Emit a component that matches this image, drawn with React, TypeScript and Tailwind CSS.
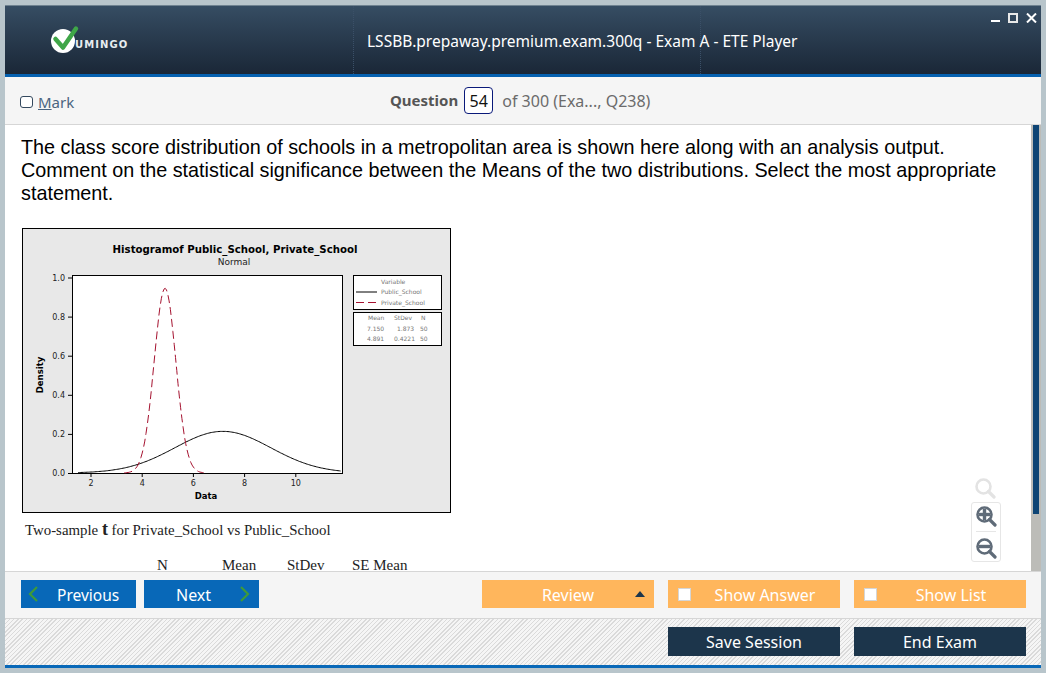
const ui = "font-['Noto_Sans','Open_Sans',sans-serif]";

// chart scale taken from the tick marks
const sx = (v: number) => 91 + 25.6 * (v - 2);
const sy = (d: number) => 473 - 195.5 * d;

function normalPath(mean: number, sd: number, from: number, to: number) {
  const pts: string[] = [];
  for (let v = from; v <= to + 0.001; v += 0.05) {
    const d = Math.exp(-((v - mean) ** 2) / (2 * sd * sd)) / (sd * Math.sqrt(2 * Math.PI));
    pts.push(`${sx(v).toFixed(1)},${sy(d).toFixed(1)}`);
  }
  return "M" + pts.join(" L");
}

function Chart() {
  const face = "'DejaVu Sans', sans-serif";
  const yTicks = [
    [1, "1.0"],
    [0.8, "0.8"],
    [0.6, "0.6"],
    [0.4, "0.4"],
    [0.2, "0.2"],
    [0, "0.0"],
  ] as const;
  return (
    <svg width="429" height="285" viewBox="22 228 429 285" className="block">
      <rect x="22.5" y="228.5" width="428" height="284" fill="#e8e8e8" stroke="#000" />
      <text x="235" y="253" textAnchor="middle" fontFamily={face} fontWeight="700" fontSize="10.2" fill="#000">
        Histogramof Public_School, Private_School
      </text>
      <text x="234" y="265" textAnchor="middle" fontFamily={face} fontSize="9" fill="#222">
        Normal
      </text>
      <rect x="72.5" y="275.5" width="270" height="198" fill="#fff" stroke="#000" />
      {yTicks.map(([d, label]) => (
        <g key={label}>
          <line x1="68" x2="72" y1={sy(d) + 0.5} y2={sy(d) + 0.5} stroke="#000" />
          <text x="65" y={sy(d) + 3} textAnchor="end" fontFamily={face} fontSize="8" fill="#222">
            {label}
          </text>
        </g>
      ))}
      {[2, 4, 6, 8, 10].map((v) => (
        <g key={v}>
          <line x1={sx(v)} x2={sx(v)} y1="473" y2="477" stroke="#000" />
          <text x={sx(v)} y="486" textAnchor="middle" fontFamily={face} fontSize="8" fill="#222">
            {v}
          </text>
        </g>
      ))}
      <text x="206" y="499" textAnchor="middle" fontFamily={face} fontWeight="700" fontSize="8.5" fill="#000">
        Data
      </text>
      <text
        transform="translate(43 375) rotate(-90)"
        textAnchor="middle"
        fontFamily={face}
        fontWeight="700"
        fontSize="8.5"
        fill="#000"
      >
        Density
      </text>
      <path d={normalPath(7.15, 1.873, 1.5, 11.75)} fill="none" stroke="#000" strokeWidth="1" />
      <path
        d={normalPath(4.891, 0.4221, 3.3, 6.4)}
        fill="none"
        stroke="#a5122f"
        strokeWidth="1"
        strokeDasharray="8 4"
      />
      <rect x="353.5" y="275.5" width="88" height="34" fill="#fff" stroke="#000" />
      <rect x="353.5" y="312.5" width="88" height="33" fill="#fff" stroke="#000" />
      <g fontFamily={face} fontSize="6" fill="#777">
        <text x="381" y="284">Variable</text>
        <text x="381" y="294">Public_School</text>
        <text x="381" y="305">Private_School</text>
        <text x="368" y="320">Mean</text>
        <text x="394" y="320">StDev</text>
        <text x="421" y="320">N</text>
        <text x="367" y="331">7.150</text>
        <text x="397" y="331">1.873</text>
        <text x="420" y="331">50</text>
        <text x="367" y="341">4.891</text>
        <text x="394" y="341">0.4221</text>
        <text x="420" y="341">50</text>
      </g>
      <line x1="356" x2="377" y1="292" y2="292" stroke="#000" />
      <line x1="356" x2="377" y1="302.5" y2="302.5" stroke="#a5122f" strokeDasharray="8 4" />
    </svg>
  );
}

function Logo() {
  return (
    <div className="flex items-end">
      <svg width="30" height="28" viewBox="0 0 30 28" className="block">
        <circle cx="13" cy="16" r="12" fill="#fff" />
        <path d="M5.5 14 L13 22.5 L26 3.5" fill="none" stroke="#3fa648" strokeWidth="4.5" strokeLinecap="round" strokeLinejoin="round" />
      </svg>
      <span className="-ml-[5px] mb-[3px] font-['DejaVu_Sans',sans-serif] text-[10px] leading-[10px] font-bold tracking-[1.1px] text-[#e8edf0]">
        UMINGO
      </span>
    </div>
  );
}

function Lens({ kind }: { kind: "plain" | "in" | "out" }) {
  const color = kind === "plain" ? "#e3e3e3" : "#5f6b78";
  return (
    <svg width="22" height="22" viewBox="0 0 22 22" className="block">
      <circle cx="9.5" cy="9.5" r="7" fill="none" stroke={color} strokeWidth="2.6" />
      <path d="M14.5 14.5 L20 20" stroke={color} strokeWidth="3.2" strokeLinecap="round" />
      {kind !== "plain" && <path d="M4 9.5 H15" stroke={color} strokeWidth="3.4" />}
      {kind === "in" && <path d="M9.5 4 V15" stroke={color} strokeWidth="3.4" />}
    </svg>
  );
}

function Chevron({ dir }: { dir: "left" | "right" }) {
  return (
    <svg width="12" height="18" viewBox="0 0 12 18" className="block">
      <path
        d={dir === "left" ? "M10 2 L3 9 L10 16" : "M2 2 L9 9 L2 16"}
        fill="none"
        stroke="#3f9a3a"
        strokeWidth="2.2"
      />
    </svg>
  );
}

function OrangeButton({ label, withBox }: { label: string; withBox?: boolean }) {
  return (
    <button
      type="button"
      className="relative flex h-[28px] w-[172px] items-center justify-center bg-[#ffb65c] pt-[1px] text-[16px] text-white"
    >
      {withBox && <span className="absolute top-[8px] left-[10px] h-[13px] w-[13px] border border-[#d5d5d5] bg-white" />}
      <span className={withBox ? "pl-[22px]" : ""}>{label}</span>
      {!withBox && <span className="absolute top-[11px] right-[9px] h-0 w-0 border-x-[5px] border-b-[6px] border-x-transparent border-b-[#1c354b]" />}
    </button>
  );
}

export default function App() {
  return (
    <div className={`h-[673px] w-[1046px] overflow-hidden bg-[#b8c5cb] pt-[5px] pr-[5px] pl-[5px] ${ui}`}>
      <div className="relative flex h-[663px] w-[1036px] flex-col bg-[#f5f5f5]">
        <header className="flex h-[72px] shrink-0 border-t border-[#6f8290] border-b-[3px] border-b-[#0661b0] bg-gradient-to-b from-[#364d63] to-[#1a2737]">
          <div className="flex w-[348px] items-center pb-[3px] pl-[45px]">
            <Logo />
          </div>
          <div className="flex w-[348px] items-center border-x border-dotted border-[#3b5068] pt-[3px] pl-[13px] text-[15.5px] whitespace-nowrap text-white">
            LSSBB.prepaway.premium.exam.300q - Exam A - ETE Player
          </div>
        </header>

        <div className="absolute top-[8px] right-[4px] flex items-end gap-[8px]">
          <span className="mb-[1px] h-[2px] w-[9px] bg-white" />
          <span className="h-[10px] w-[10px] border-2 border-[#e8e8e8]" />
          <svg width="11" height="10" viewBox="0 0 11 10" className="block">
            <path d="M1 0.5 L10 9.5 M10 0.5 L1 9.5" stroke="#fff" strokeWidth="2" />
          </svg>
        </div>

        <div className="relative flex h-[48px] shrink-0 items-center border-b border-[#d6d6d6] pt-[3px]">
          <div className="flex items-center pl-[15px]">
            <span className="h-[12px] w-[13px] rounded-[3px] border border-[#34495e] bg-white" />
            <span className="ml-[5px] text-[15px] text-[#4a6480]">
              <span className="underline">M</span>ark
            </span>
          </div>
          <div className="absolute top-[10px] left-[385px] flex items-center text-[15px]">
            <span className="font-bold text-[#555]">Question</span>
            <span className="ml-[6px] flex h-[27px] w-[29px] items-center justify-center rounded-[4px] border border-[#0a1a7a] bg-white text-[16px] text-[#111]">
              54
            </span>
            <span className="ml-[9px] text-[16px] text-[#6b6b6b]">of 300 (Exa..., Q238)</span>
          </div>
        </div>

        <div className="flex h-[447px] shrink-0 border-b border-[#d6d6d6]">
          <div className="relative w-[1026px] shrink-0 overflow-hidden bg-white pt-[11px] pl-[16px] font-['Liberation_Sans',sans-serif]">
            <p className="w-[990px] text-[19.8px] leading-[23px] text-black">
              The class score distribution of schools in a metropolitan area is shown here along with an analysis output.
              Comment on the statistical significance between the Means of the two distributions. Select the most appropriate
              statement.
            </p>
            <div className="mt-[23px] ml-[1px]">
              <Chart />
            </div>
            <p className="mt-[8px] ml-[4px] font-['Liberation_Serif',serif] text-[14.85px] leading-[17px] text-[#222]">
              Two-sample <span className="text-[18px] font-bold">t</span> for Private_School vs Public_School
            </p>
            <div className="mt-[18px] flex font-['Liberation_Serif',serif] text-[15px] leading-[17px] text-[#222]">
              <span className="ml-[136px] w-[65px]">N</span>
              <span className="w-[65px]">Mean</span>
              <span className="w-[65px]">StDev</span>
              <span>SE Mean</span>
            </div>
            <div className="absolute top-[352px] left-[969px] flex flex-col items-center">
              <Lens kind="plain" />
            </div>
            <div className="absolute top-[377px] left-[966px] flex h-[60px] w-[30px] flex-col items-center justify-around rounded-[3px] border border-[#e6e6e6] bg-white">
              <Lens kind="in" />
              <span className="h-px w-[20px] bg-[#e6e6e6]" />
              <Lens kind="out" />
            </div>
          </div>
          <div className="flex w-[10px] shrink-0 justify-center bg-[#bcbcb8]">
            <div className="h-[389px] w-[6px] bg-[#0d4474]" />
          </div>
        </div>

        <div className="flex h-[46px] shrink-0 items-center pr-[15px] pb-[2px] pl-[16px] text-[16px] leading-[24px] text-white">
          <button type="button" className="flex h-[28px] w-[115px] items-center bg-[#0868b8] pl-[6px]">
            <Chevron dir="left" />
            <span className="mt-[1px] ml-[18px] text-[15.5px] leading-[24px]">Previous</span>
          </button>
          <button type="button" className="ml-[8px] flex h-[28px] w-[115px] items-center bg-[#0868b8] pr-[8px] pl-[32px]">
            <span className="mt-[1px]">Next</span>
            <span className="ml-auto">
              <Chevron dir="right" />
            </span>
          </button>
          <div className="ml-auto flex gap-[14px]">
            <OrangeButton label="Review" />
            <OrangeButton label="Show Answer" withBox />
            <OrangeButton label="Show List" withBox />
          </div>
        </div>

        <div className="flex h-[47px] shrink-0 items-center justify-end gap-[14px] border-t border-[#d6d6d6] bg-[repeating-linear-gradient(135deg,#dadada_0,#dadada_1px,#f5f5f5_1px,#f5f5f5_3px)] pr-[15px] pb-[1px] text-[16px] text-white">
          <button type="button" className="h-[29px] w-[172px] bg-[#1c354b]">Save Session</button>
          <button type="button" className="h-[29px] w-[172px] bg-[#1c354b]">End Exam</button>
        </div>
        <div className="h-[3px] shrink-0 bg-[#0868b8]" />
      </div>
    </div>
  );
}
